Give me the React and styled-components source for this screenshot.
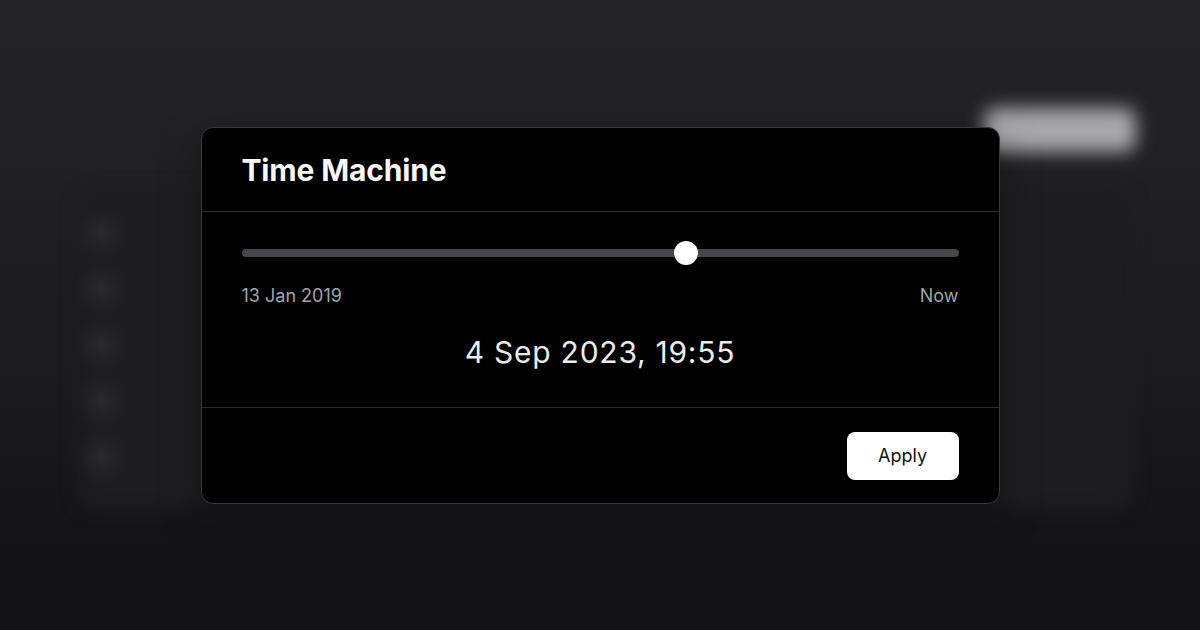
import React from "react";
import styled, { createGlobalStyle } from "styled-components";

const Global = createGlobalStyle`
  * { box-sizing: border-box; }
  html, body { margin: 0; padding: 0; }
  body {
    width: 1200px;
    height: 630px;
    overflow: hidden;
    font-family: Inter, "Noto Sans", sans-serif;
    background: #1b1b1e;
  }
`;

const Screen = styled.div`
  position: relative;
  width: 1200px;
  height: 630px;
  overflow: hidden;
  background: linear-gradient(180deg, #252528 0%, #1c1c1f 50%, #121214 100%);
`;

/* Dashboard under the modal, softened by a blur */
const Backdrop = styled.div`
  position: absolute;
  inset: 0;
  filter: blur(9px);
  display: flex;
  flex-direction: column;
  padding: 0 70px 0 80px;
`;

const TopBar = styled.div`
  height: 108px;
  display: flex;
  align-items: flex-end;
  justify-content: flex-end;
`;

const GhostButton = styled.div`
  width: 152px;
  height: 44px;
  margin: 0 -6px -44px 0;
  border-radius: 12px;
  background: #a8a8aa;
`;

const Panel = styled.div`
  margin-top: 84px;
  height: 316px;
  border-radius: 14px;
  background: #1d1d20;
  display: flex;
  padding: 28px 0 0 8px;
`;

const SideList = styled.div`
  display: flex;
  flex-direction: column;
  gap: 30px;
`;

const SideDot = styled.div`
  width: 26px;
  height: 26px;
  border-radius: 7px;
  background: #2b2b30;
`;

const Overlay = styled.div`
  position: absolute;
  inset: 0;
  display: flex;
  align-items: flex-start;
  justify-content: center;
  padding-top: 127px;
`;

const Dialog = styled.div`
  width: 799px;
  background: #000;
  border: 1px solid #38383b;
  border-radius: 12px;
  box-shadow: 0 12px 40px rgba(0, 0, 0, 0.35);
  display: flex;
  flex-direction: column;
`;

const Header = styled.div`
  height: 84px;
  display: flex;
  align-items: center;
  padding: 0 40px;
  border-bottom: 1px solid #2c2c2f;
`;

const Title = styled.h2`
  margin: 0;
  font-size: 30px;
  font-weight: 700;
  color: #f7f7f7;
  letter-spacing: -0.005em;
`;

const Body = styled.div`
  padding: 29px 40px 0;
  height: 195px;
  display: flex;
  flex-direction: column;
`;

const Slider = styled.div`
  position: relative;
  height: 24px;
  display: flex;
  align-items: center;
`;

const Track = styled.div`
  flex: 1;
  height: 8px;
  border-radius: 4px;
  background: #45454b;
`;

const Thumb = styled.div`
  position: absolute;
  top: 0;
  width: 24px;
  height: 24px;
  margin-left: -12px;
  border-radius: 50%;
  background: #ffffff;
`;

const Range = styled.div`
  margin-top: 20px;
  display: flex;
  justify-content: space-between;
  font-size: 18px;
  line-height: 22px;
  color: #a3a3a9;
`;

const Current = styled.div`
  margin-top: 27px;
  text-align: center;
  font-size: 30px;
  line-height: 36px;
  letter-spacing: 0.025em;
  color: #ececec;
`;

const Footer = styled.div`
  height: 96px;
  display: flex;
  align-items: center;
  justify-content: flex-end;
  padding: 0 40px;
  border-top: 1px solid #2c2c2f;
`;

const Button = styled.button`
  width: 112px;
  height: 48px;
  border: none;
  border-radius: 8px;
  background: #ffffff;
  color: #111;
  font-family: Inter, "Noto Sans", sans-serif;
  font-size: 18px;
  cursor: pointer;
`;

export default function App() {
  const position = 0.62;
  return (
    <>
      <Global />
      <Screen>
        <Backdrop>
          <TopBar>
            <GhostButton />
          </TopBar>
          <Panel>
            <SideList>
              {[0, 1, 2, 3, 4].map((i) => (
                <SideDot key={i} />
              ))}
            </SideList>
          </Panel>
        </Backdrop>
        <Overlay>
          <Dialog>
            <Header>
              <Title>Time Machine</Title>
            </Header>
            <Body>
              <Slider>
                <Track />
                <Thumb style={{ left: `${position * 100}%` }} />
              </Slider>
              <Range>
                <span>13 Jan 2019</span>
                <span>Now</span>
              </Range>
              <Current>4 Sep 2023, 19:55</Current>
            </Body>
            <Footer>
              <Button>Apply</Button>
            </Footer>
          </Dialog>
        </Overlay>
      </Screen>
    </>
  );
}
